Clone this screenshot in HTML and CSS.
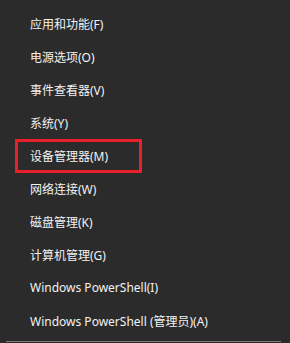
FILE: index.html
```html
<!DOCTYPE html>
<html>
<head>
    <meta charset="utf-8">
    <title>快速链接菜单</title>
    <link rel="stylesheet" href="styles.css">
</head>
<body>
    <div class="menu">
        <div class="menu-item">应用和功能(F)</div>
        <div class="menu-item">电源选项(O)</div>
        <div class="menu-item">事件查看器(V)</div>
        <div class="menu-item">系统(Y)</div>
        <div class="menu-item marked">设备管理器(M)</div>
        <div class="menu-item">网络连接(W)</div>
        <div class="menu-item">磁盘管理(K)</div>
        <div class="menu-item">计算机管理(G)</div>
        <div class="menu-item">Windows PowerShell(I)</div>
        <div class="menu-item">Windows PowerShell (管理员)(A)</div>
        <div class="separator"></div>
    </div>
</body>
</html>
```

FILE: styles.css
```css
html, body {
    margin: 0;
    padding: 0;
    background-color: #2b2b2b;
}
body {
    font-family: "Noto Sans", "Noto Sans CJK SC", sans-serif;
    font-size: 12px;
    color: #f2f2f2;
}
.menu {
    display: flex;
    flex-direction: column;
    padding-top: 7px;
}
.menu-item {
    height: 33px;
    display: flex;
    align-items: center;
    padding-left: 30px;
    white-space: nowrap;
}
.menu-item.marked {
    box-sizing: border-box;
    width: 127px;
    height: 34px;
    margin-left: 15px;
    margin-bottom: -1px;
    padding-left: 12px;
    border: 3px solid #e8202a;
}
.separator {
    height: 1px;
    margin: 4px 9px 0 6px;
    background-color: #7a7a7a;
}
```
